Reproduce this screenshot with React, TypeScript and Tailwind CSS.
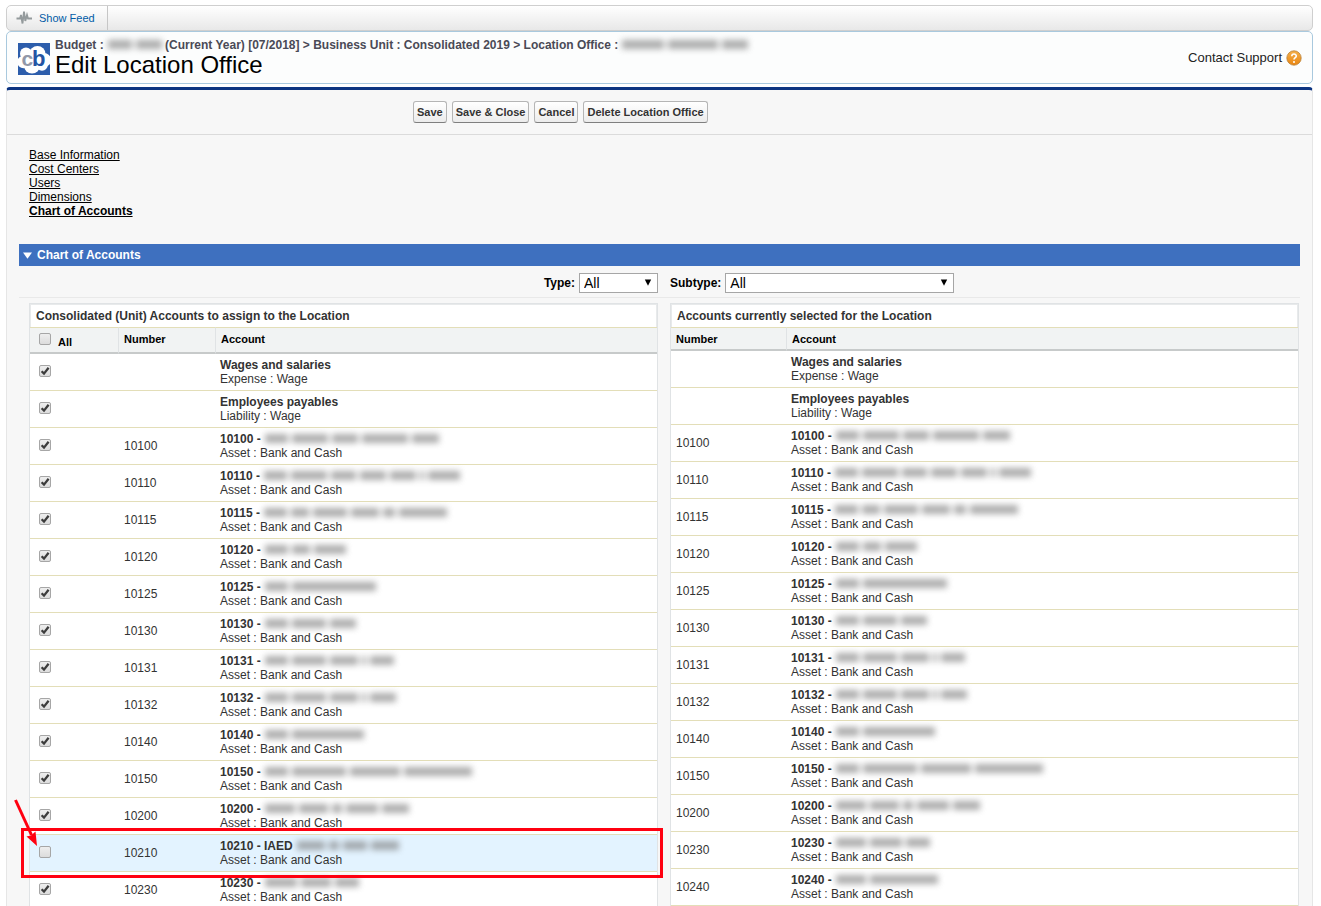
import React from "react";

type Row = {
  number?: string;
  title?: string;
  note?: string;
  kind: string;
  words?: number[];
  checked?: boolean;
  marked?: boolean;
};

const BANK = "Asset : Bank and Cash";

const shared: Row[] = [
  { title: "Wages and salaries", kind: "Expense : Wage" },
  { title: "Employees payables", kind: "Liability : Wage" },
  { number: "10100", kind: BANK, words: [23, 36, 26, 46, 27] },
  { number: "10110", kind: BANK, words: [23, 36, 25, 26, 26, 4, 32] },
  { number: "10115", kind: BANK, words: [23, 18, 34, 28, 12, 48] },
  { number: "10120", kind: BANK, words: [23, 18, 32] },
  { number: "10125", kind: BANK, words: [23, 84] },
  { number: "10130", kind: BANK, words: [23, 34, 26] },
  { number: "10131", kind: BANK, words: [23, 34, 28, 4, 24] },
  { number: "10132", kind: BANK, words: [23, 34, 28, 4, 26] },
  { number: "10140", kind: BANK, words: [23, 72] },
  { number: "10150", kind: BANK, words: [23, 54, 50, 68] },
  { number: "10200", kind: BANK, words: [30, 29, 10, 32, 27] },
];

const unitRows: Row[] = [
  ...shared.map((row) => ({ ...row, checked: true })),
  { number: "10210", note: "IAED", kind: BANK, words: [28, 10, 24, 28], marked: true },
  { number: "10230", kind: BANK, words: [32, 30, 24], checked: true },
];

const locationRows: Row[] = [
  ...shared,
  { number: "10230", kind: BANK, words: [30, 32, 24] },
  { number: "10240", kind: BANK, words: [30, 68] },
];

function Redacted({ words }: { words: number[] }) {
  return (
    <span className="ml-1 inline-flex gap-1 align-baseline opacity-60 blur-[3px]" aria-hidden="true">
      {words.map((width, i) => (
        <span key={i} className="h-[9px] bg-[#777777]" style={{ width }} />
      ))}
    </span>
  );
}

function Tick({ label, checked = false }: { label: string; checked?: boolean }) {
  return (
    <span className="relative block size-3">
      <input
        type="checkbox"
        aria-label={label}
        defaultChecked={checked}
        className="peer block size-3 appearance-none rounded-xs border border-[#a6a6a6] bg-linear-to-b from-[#eeeeee] to-[#dcdcdc]"
      />
      <svg
        viewBox="0 0 12 12"
        className="pointer-events-none absolute inset-0 hidden size-3 peer-checked:block"
        fill="none"
        stroke="#3c3c3c"
        strokeWidth="2.3"
      >
        <path d="M2.6 6.2 L5 8.6 L9.6 2.8" />
      </svg>
    </span>
  );
}

function Marker() {
  return (
    <>
      <span className="pointer-events-none absolute -top-[7px] -right-[6px] -bottom-[6px] -left-[9px] z-10 border-3 border-[#ff0010]" />
      <svg
        viewBox="0 0 26 50"
        className="pointer-events-none absolute -top-[37px] -left-[17px] z-10 h-[50px] w-[26px]"
      >
        <path d="M2.5 2 L18.5 37" stroke="#ff0010" strokeWidth="3" />
        <path d="M24 48 L13.5 38.5 L18 37.5 L22.5 33.5 Z" fill="#ff0010" />
      </svg>
    </>
  );
}

function AccountText({ row }: { row: Row }) {
  return (
    <>
      <div className="h-3.5 font-bold whitespace-nowrap">
        {row.title ?? `${row.number} -`}
        {row.note && ` ${row.note}`}
        {row.words && <Redacted words={row.words} />}
      </div>
      <div>{row.kind}</div>
    </>
  );
}

function AccountTable({ title, rows, selectable = false }: { title: string; rows: Row[]; selectable?: boolean }) {
  return (
    <section className="min-w-0 border-x border-t border-[#e0e3e5] bg-white">
      <h3 className="border-x border-t border-[#e8eaeb] px-[5px] pt-[5px] pb-1 text-[12px] leading-[13px] font-bold text-[#333333]">
        {title}
      </h3>
      <table className="w-full table-fixed border-separate border-spacing-0 text-left text-[12px] leading-[14px] text-[#333333]">
        <thead className="text-[11px] text-black">
          <tr className="bg-[#f1f3f3] align-top">
            {selectable && (
              <th className="w-[88px] border-t border-b-2 border-t-[#e3deb8] border-b-[#c7caca] pt-[5px] pb-px pl-[9px]">
                <span className="flex h-[18px] items-start gap-[7px]">
                  <Tick label="Select all accounts" />
                  <span className="pt-0.5">All</span>
                </span>
              </th>
            )}
            <th
              className={
                selectable
                  ? "w-[97px] border-t border-b-2 border-l border-t-[#e3deb8] border-b-[#c7caca] border-l-[#e0e3e5] pt-1 pb-[3px] pl-[5px]"
                  : "w-[115px] border-t border-b-2 border-t-[#e3deb8] border-b-[#c7caca] pt-1 pb-[3px] pl-[5px]"
              }
            >
              Number
            </th>
            <th className="border-t border-b-2 border-l border-t-[#e3deb8] border-b-[#c7caca] border-l-[#e0e3e5] pt-1 pb-[3px] pl-[5px]">
              Account
            </th>
          </tr>
        </thead>
        <tbody>
          {rows.map((row) => (
            <tr
              key={row.number ?? row.title}
              className={row.marked ? "relative bg-[#e3f3ff]" : "bg-white"}
            >
              {selectable && (
                <td className="border-b border-[#e3deb8] pb-0.5 pl-[9px]">
                  <Tick label={row.title ?? `Account ${row.number}`} checked={row.checked} />
                  {row.marked && <Marker />}
                </td>
              )}
              <td className={selectable ? "border-b border-[#e3deb8] pl-1.5" : "border-b border-[#e3deb8] pl-[5px]"}>
                {row.number}
              </td>
              <td className="border-b border-[#e3deb8] py-1 pl-[5px]">
                <AccountText row={row} />
              </td>
            </tr>
          ))}
        </tbody>
      </table>
    </section>
  );
}

function Filter({ id, label, wide = false }: { id: string; label: string; wide?: boolean }) {
  return (
    <div className="flex items-center gap-1">
      <label htmlFor={id} className="font-bold">
        {label}
      </label>
      <span className="relative">
        <select
          id={id}
          defaultValue="All"
          className={
            wide
              ? "block h-5 w-[229px] appearance-none border border-[#a6a6a6] bg-white pl-1 text-[14px] leading-[17px]"
              : "block h-5 w-[79px] appearance-none border border-[#a6a6a6] bg-white pl-1 text-[14px] leading-[17px]"
          }
        >
          <option>All</option>
        </select>
        <svg viewBox="0 0 8 7" className="pointer-events-none absolute top-1.5 right-1.5 h-[7px] w-2">
          <path d="M0.8 0.5 H7.2 L4 6.8 Z" fill="#000" />
        </svg>
      </span>
    </div>
  );
}

function Logo() {
  return (
    <svg viewBox="0 0 32 32" className="mt-0.5 size-8 shrink-0" role="img" aria-label="cb">
      <rect width="32" height="32" fill="#2c5dab" />
      <g fill="#fff">
        <circle cx="8" cy="10.5" r="6" />
        <circle cx="19.5" cy="11" r="8" />
        <circle cx="26" cy="17" r="7" />
        <circle cx="5.5" cy="19" r="6.2" />
        <circle cx="14" cy="22.5" r="8" />
        <circle cx="24" cy="22" r="5.8" />
      </g>
      <text x="3.5" y="22.8" fontSize="21" fontWeight="700" fill="#9298a8" fontFamily="Liberation Sans, sans-serif">
        c
      </text>
      <text x="14" y="22.8" fontSize="22" fontWeight="700" fill="#2455a4" fontFamily="Liberation Sans, sans-serif">
        b
      </text>
    </svg>
  );
}

const buttonClass =
  "h-[22px] rounded-[3px] border border-[#b5b5b5] border-b-[#7f7f7f] bg-linear-to-b from-white to-[#ececec] px-[3px] text-[11px] leading-[20px] font-bold text-[#333333]";

const links = ["Base Information", "Cost Centers", "Users", "Dimensions"];

export default function App() {
  return (
    <div className="h-screen overflow-hidden bg-white pt-[5px] pr-2 pl-1.5 font-['Liberation_Sans',Arial,sans-serif] text-[12px] leading-[14px] text-black">
      <div className="flex h-[26px] rounded-[5px] border border-[#cfcfcf] bg-linear-to-b from-white to-[#e8e8e8]">
        <a
          href="#feed"
          className="flex items-center gap-1.5 border-r border-[#c6c6c6] pr-3 pl-[9px] text-[11px] text-[#015ba7]"
        >
          <svg viewBox="0 0 17 16" className="h-4 w-[17px]" fill="none" stroke="#949a9c" strokeWidth="1.8">
            <path d="M0.5 8.5 H4 L5 5 L6.5 13.5 L8 1.5 L9.3 11 L11 5 L12 8.5 H16" />
          </svg>
          Show Feed
        </a>
      </div>

      <header className="flex items-center justify-between rounded-[5px] border border-[#a9c9de] bg-[#fcfdfd] pt-1.5 pr-2.5 pb-[5px] pl-[11px]">
        <div className="flex items-center gap-[5px]">
          <Logo />
          <div>
            <div className="font-bold whitespace-nowrap text-[#4a4a56]">
              Budget :<Redacted words={[24, 26]} /> (Current Year) [07/2018] &gt; Business Unit : Consolidated
              2019 &gt; Location Office :<Redacted words={[42, 50, 26]} />
            </div>
            <h1 className="text-[24px] leading-[26px]">Edit Location Office</h1>
          </div>
        </div>
        <a href="#support" className="flex items-center gap-1 text-[13px] text-[#222222]">
          Contact Support
          <svg viewBox="0 0 16 16" className="size-4">
            <defs>
              <linearGradient id="help" x1="0" y1="0" x2="0" y2="1">
                <stop offset="0" stopColor="#f5b14c" />
                <stop offset="1" stopColor="#e98510" />
              </linearGradient>
            </defs>
            <circle cx="8" cy="8" r="7.2" fill="url(#help)" stroke="#b9813a" strokeWidth="0.8" />
            <path
              d="M5.8 6.2 C5.8 3.4 10.3 3.4 10.3 6 C10.3 7.7 8 7.7 8 9.6"
              fill="none"
              stroke="#fff"
              strokeWidth="1.6"
            />
            <circle cx="8" cy="12" r="1" fill="#fff" />
          </svg>
        </a>
      </header>

      <main className="mt-[3px] rounded-[4px] border-x border-t-3 border-x-[#e6e6e6] border-t-[#0c3481] bg-[#f7f7f7]">
        <div className="flex gap-[5px] border-b border-[#dbdbdb] pt-[11px] pb-[11px] pl-[406px]">
          <button className={buttonClass}>Save</button>
          <button className={buttonClass}>Save &amp; Close</button>
          <button className={buttonClass}>Cancel</button>
          <button className={buttonClass}>Delete Location Office</button>
        </div>

        <nav className="flex flex-col items-start pt-[13px] pb-[26px] pl-[22px]">
          {links.map((link) => (
            <a key={link} href="#section" className="underline">
              {link}
            </a>
          ))}
          <a href="#accounts" className="font-bold underline">
            Chart of Accounts
          </a>
        </nav>

        <div className="px-3">
          <h2 className="flex h-[22px] items-center gap-[5px] bg-[#3e70bf] pl-1 font-bold text-white">
            <svg viewBox="0 0 9 7" className="h-[7px] w-[9px]">
              <path d="M0 0.5 H9 L4.5 6.8 Z" fill="#fff" />
            </svg>
            Chart of Accounts
          </h2>

          <div className="grid grid-cols-2 gap-3 border-b border-[#e9e9e9] pt-[7px] pr-px pb-1 pl-2.5">
            <div className="flex justify-end">
              <Filter id="type" label="Type:" />
            </div>
            <Filter id="subtype" label="Subtype:" wide />
          </div>

          <div className="grid grid-cols-2 items-start gap-3 pt-[5px] pr-px pl-2.5">
            <AccountTable title="Consolidated (Unit) Accounts to assign to the Location" rows={unitRows} selectable />
            <AccountTable title="Accounts currently selected for the Location" rows={locationRows} />
          </div>
        </div>
      </main>
    </div>
  );
}
